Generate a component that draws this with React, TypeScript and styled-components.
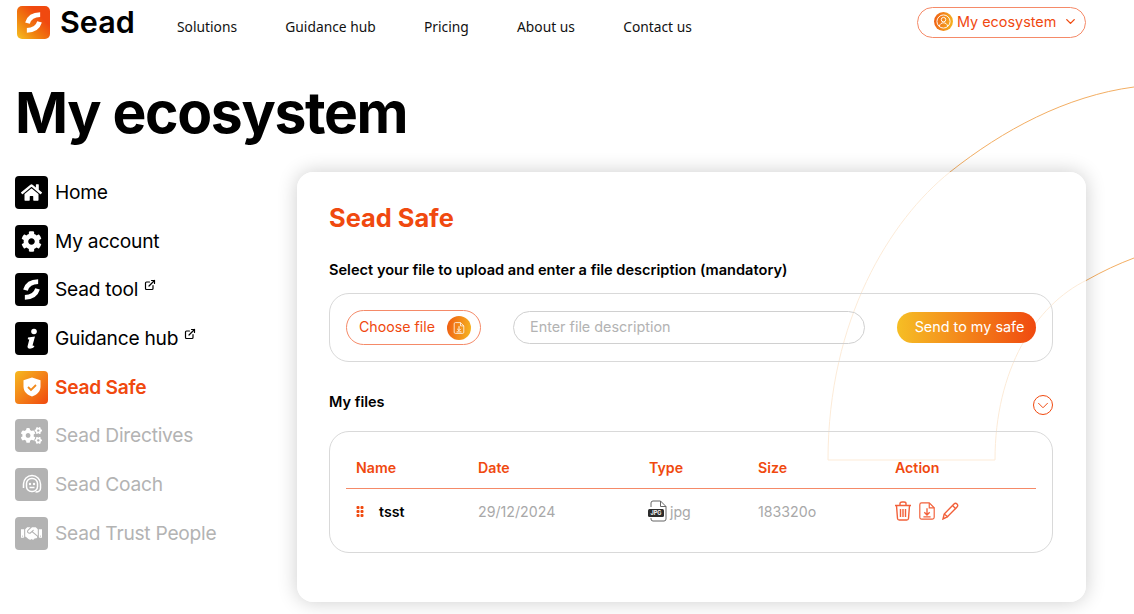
import React from "react";
import styled, { createGlobalStyle } from "styled-components";
import { ChevronDown, ExternalLink } from "lucide-react";
import { FaCog, FaCogs, FaHandshake, FaHome } from "react-icons/fa";

const orange = "#f0490f";

const GlobalStyle = createGlobalStyle`
  html, body {
    margin: 0;
    padding: 0;
    background: #fff;
    font-family: "Inter", "Liberation Sans", sans-serif;
    color: #000;
    overflow: hidden;
  }
  * { box-sizing: border-box; }
`;

const Page = styled.div`
  position: relative;
  width: 1134px;
  height: 614px;
  overflow: hidden;
`;

const Decor = styled.svg`
  position: absolute;
  inset: 0;
  pointer-events: none;
`;

const Layout = styled.div`
  position: relative;
  padding: 0 48px 0 15px;
`;

const Header = styled.header`
  display: flex;
  align-items: flex-start;
  height: 47px;
  padding-top: 5px;
`;

const Logo = styled.div`
  display: flex;
  align-items: center;
  gap: 10px;
  width: 162px;
  padding-left: 2px;
  font-size: 30.5px;
  font-weight: 600;
  line-height: 34px;
`;

const LogoIcon = styled.span`
  display: flex;
  align-items: center;
  justify-content: center;
  width: 33px;
  height: 33px;
  border-radius: 5px;
  background: linear-gradient(45deg, #f6c123, #f0800f 35%, #f0490f 70%);
`;

const Nav = styled.nav`
  display: flex;
  gap: 48.25px;
  padding-top: 12px;
  font-family: "Noto Sans", sans-serif;
  font-size: 13.8px;
  line-height: 20px;
  color: #111;
`;

const EcosystemButton = styled.button`
  margin-left: auto;
  margin-top: 2px;
  display: flex;
  align-items: center;
  height: 31px;
  width: 169px;
  padding: 0 14px 2px 16px;
  border: 1px solid #f58a68;
  border-radius: 16px;
  background: #fff;
  color: ${orange};
  font-family: inherit;
  font-size: 14.4px;
  gap: 4px;
  white-space: nowrap;
`;

const Title = styled.h1`
  margin: 0;
  font-size: 57px;
  line-height: 72px;
  font-weight: 700;
  font-optical-sizing: none;
  letter-spacing: -1.35px;
  padding-top: 30px;
`;

const Content = styled.div`
  display: flex;
  margin-top: 23px;
`;

const Sidebar = styled.ul`
  list-style: none;
  margin: 0;
  padding: 4px 0 0;
  width: 282px;
  display: flex;
  flex-direction: column;
  gap: 15.7px;
`;

const SideItem = styled.li<{ $state?: "active" | "disabled" }>`
  display: flex;
  align-items: flex-start;
  gap: 7px;
  height: 33px;
  font-size: 19.2px;
  line-height: 32px;
  letter-spacing: -0.25px;
  font-weight: ${(p) => (p.$state === "active" ? 600 : 400)};
  color: ${(p) => (p.$state === "active" ? orange : p.$state === "disabled" ? "#b3b3b3" : "#000")};
`;

const SideIcon = styled.span<{ $state?: "active" | "disabled" }>`
  display: flex;
  align-items: center;
  justify-content: center;
  flex-shrink: 0;
  width: 33px;
  height: 33px;
  border-radius: 4px;
  color: #fff;
  background: ${(p) =>
    p.$state === "active"
      ? "linear-gradient(135deg, #f6b921, #f0490f)"
      : p.$state === "disabled"
      ? "#b3b3b3"
      : "#000"};
`;

const OutLink = styled(ExternalLink)`
  margin: 6px 0 0 -1px;
`;

const Card = styled.main`
  width: 789px;
  height: 430px;
  padding: 29px 33px 0 32px;
  border-radius: 16px;
  background: rgba(255, 255, 255, 0.75);
  box-shadow: 0 0 20px rgba(0, 0, 0, 0.2);
`;

const CardTitle = styled.h2`
  margin: 0;
  font-size: 25.4px;
  line-height: 34px;
  font-weight: 700;
  color: ${orange};
`;

const Mandatory = styled.p`
  margin: 27px 0 14px;
  font-size: 14.6px;
  line-height: 17px;
  font-weight: 600;
`;

const UploadBox = styled.div`
  display: flex;
  align-items: center;
  height: 69px;
  padding: 0 16px;
  border: 1px solid #d9d9d9;
  border-radius: 20px;
`;

const ChooseFile = styled.button`
  display: flex;
  align-items: center;
  justify-content: space-between;
  flex-shrink: 0;
  width: 135px;
  height: 35px;
  padding: 0 9px 2px 12px;
  border: 1px solid #f58a68;
  border-radius: 18px;
  background: #fff;
  color: ${orange};
  font-family: inherit;
  font-size: 14.2px;
`;

const Badge = styled.span<{ $size: number }>`
  display: flex;
  align-items: center;
  justify-content: center;
  flex-shrink: 0;
  width: ${(p) => p.$size}px;
  height: ${(p) => p.$size}px;
  border-radius: 50%;
  color: #fff;
  background: linear-gradient(100deg, #ef5a12, #f6b921);
`;

const FileBadge = styled(Badge)`
  margin-bottom: -2px;
`;

const DescriptionInput = styled.input`
  flex-shrink: 0;
  width: 352px;
  height: 33px;
  margin: 0 32px;
  padding: 0 16px 2px;
  border: 1px solid #d0d0d0;
  border-radius: 17px;
  background: transparent;
  font-family: inherit;
  font-size: 14.4px;
  &::placeholder { color: #b3b3b3; opacity: 1; }
`;

const SendButton = styled.button`
  flex-shrink: 0;
  width: 139px;
  height: 31px;
  padding: 0 0 2px 6px;
  border: 0;
  border-radius: 16px;
  color: #fff;
  background: linear-gradient(90deg, #f6be25, #f0490f);
  font-family: inherit;
  font-size: 14.4px;
`;

const FilesHead = styled.div`
  display: flex;
  justify-content: space-between;
  align-items: flex-start;
  height: 69px;
  padding-top: 31px;
  font-size: 14.5px;
  line-height: 17px;
  font-weight: 600;
`;

const Toggle = styled.span`
  display: flex;
  align-items: center;
  justify-content: center;
  width: 20px;
  height: 20px;
  margin-top: 2px;
  border: 1px solid ${orange};
  border-radius: 50%;
  color: ${orange};
`;

const TableBox = styled.div`
  height: 122px;
  padding: 0 16px;
  border: 1px solid #d9d9d9;
  border-radius: 20px;
`;

const columns = "122px 171px 109px 137px 1fr";

const HeadRow = styled.div`
  display: grid;
  grid-template-columns: ${columns};
  align-items: center;
  height: 57px;
  padding: 14px 0 0 10px;
  border-bottom: 1px solid #f58a68;
  color: ${orange};
  font-size: 14.2px;
  font-weight: 600;
`;

const BodyRow = styled.div`
  display: grid;
  grid-template-columns: ${columns};
  align-items: center;
  height: 44px;
  padding-left: 10px;
  color: #a8a8a8;
  font-size: 14.2px;
`;

const NameCell = styled.div`
  display: flex;
  align-items: center;
  gap: 15px;
  color: #000;
  font-weight: 600;
`;

const TypeCell = styled.div`
  display: flex;
  align-items: center;
  gap: 3px;
  margin-left: -1px;
`;

const Actions = styled.div`
  display: flex;
  align-items: center;
  gap: 6px;
  margin-left: -1px;
  color: #f2603a;
`;

const SeadMark = ({ size, color }: { size: number; color: string }) => (
  <svg width={size} height={size} viewBox="0 0 24 24" fill="none" stroke={color} strokeWidth="4">
    <path d="M17.500 5.500C12.500 5.500 8.500 7.500 7 12.500" />
    <path d="M17 11.500C15.500 16.500 11.500 18.500 6.500 18.500" />
  </svg>
);

const InfoGlyph = () => (
  <svg width="24" height="24" viewBox="0 0 24 24" fill="#fff">
    <circle cx="14" cy="4.500" r="2.800" />
    <path d="M8 10.500l7-1-2.500 9 2 .5-1 1.500c-2 1.500-6 2-6-1l1.800-7-1.500-.3z" />
  </svg>
);

const ShieldIcon = () => (
  <svg width="24" height="24" viewBox="0 0 24 24">
    <path d="M12 2.500l8.500 2.800v6.200c0 5-3.600 8.400-8.500 10-4.900-1.600-8.500-5-8.500-10V5.300z" fill="#fff" />
    <path d="M8 12l3 3 5-5" fill="none" stroke="#f28a1c" strokeWidth="1.800" />
  </svg>
);

const CoachIcon = () => (
  <svg width="24" height="24" viewBox="0 0 24 24" fill="none" stroke="#fff" strokeWidth="1.500">
    <path d="M3.500 15v-4a8.500 8.500 0 0 1 17 0v4c0 2.500-2 4-5 4" />
    <rect x="6.500" y="5.500" width="11" height="13" rx="5" />
    <circle cx="10" cy="11" r="1.200" fill="#fff" stroke="none" />
    <circle cx="14" cy="11" r="1.200" fill="#fff" stroke="none" />
    <path d="M9.500 14.500h5" />
  </svg>
);

const FileIcon = ({ size }: { size: number }) => (
  <svg width={size} height={size} viewBox="0 0 18 20" fill="none" stroke="currentColor" strokeWidth="1.300">
    <path d="M3 1h8.500L17 6.500V17a2 2 0 0 1-2 2H3a2 2 0 0 1-2-2V3a2 2 0 0 1 2-2z" />
    <path d="M11.500 1v5.500H17" />
    <path d="M9 7v7M6 11.500L9 14.500l3-3M5 16.500h8" strokeWidth="1.500" />
  </svg>
);

const TrashIcon = () => (
  <svg width="18" height="20" viewBox="0 0 18 20" fill="none" stroke="currentColor" strokeWidth="1.400">
    <path d="M1 4.500h16M6 4V2.500C6 1.500 7 1 8 1h2c1 0 2 .5 2 1.500V4" />
    <path d="M2.500 4.500l1 13c.1 1 .8 1.500 1.700 1.500h7.600c.9 0 1.600-.5 1.700-1.500l1-13" />
    <path d="M6.500 8v8M9 8v8M11.500 8v8" />
  </svg>
);

const PencilIcon = () => (
  <svg width="17" height="18" viewBox="0 0 17 18" fill="none" stroke="currentColor" strokeWidth="1.400">
    <path d="M1 17l1.200-5L12 2c1-1 2-1 3 0s1 2 0 3l-9.800 10z" />
    <path d="M2.200 12l3.800 3M10.500 3.500l3.500 3.500" />
  </svg>
);

const JpgIcon = () => (
  <svg width="19" height="22" viewBox="0 0 19 22" fill="none">
    <path d="M3 7V3a2 2 0 0 1 2-2h7.500L18 6.500V19a2 2 0 0 1-2 2H5a2 2 0 0 1-2-2v-1" stroke="#666" strokeWidth="1" />
    <path d="M12.500 1v5.500H18" stroke="#666" strokeWidth="1" />
    <rect x="0" y="9" width="16" height="8" rx="1.500" fill="#2b2b2b" />
    <text x="8" y="15.300" textAnchor="middle" fontFamily="Inter, sans-serif" fontSize="5.500" fontWeight="700" fill="#fff">JPG</text>
  </svg>
);

const GripIcon = () => (
  <svg width="8" height="11" viewBox="0 0 8 11" fill={orange}>
    {[0, 4, 8].map((y) => (
      <React.Fragment key={y}>
        <rect x="0.500" y={y} width="3" height="3" rx="1" />
        <rect x="4.500" y={y} width="3" height="3" rx="1" />
      </React.Fragment>
    ))}
  </svg>
);

const navItems = ["Solutions", "Guidance hub", "Pricing", "About us", "Contact us"];

const App = () => (
  <Page>
    <GlobalStyle />
    <Decor width="1134" height="614" viewBox="0 0 1134 614" fill="none" stroke="#f3ae63" strokeWidth="1">
      <path d="M1134 87C1066 96 1003 130 950 172C890 220 828 320 828 460H995C995 370 1035 305 1087 280C1103 271 1118 264 1134 258" />
    </Decor>
    <Layout>
      <Header>
        <Logo>
          <LogoIcon><SeadMark size={29} color="#fff" /></LogoIcon>
          Sead
        </Logo>
        <Nav>
          {navItems.map((n) => (
            <span key={n}>{n}</span>
          ))}
        </Nav>
        <EcosystemButton>
          <Badge $size={19}>
            <svg width="15" height="15" viewBox="0 0 16 16" fill="none" stroke="#fff" strokeWidth="1">
              <circle cx="8" cy="8" r="7" />
              <circle cx="8" cy="6" r="2.400" />
              <path d="M3.500 13c.8-2.600 2.500-3.600 4.500-3.600s3.700 1 4.500 3.600" />
            </svg>
          </Badge>
          My ecosystem
          <ChevronDown size={15} strokeWidth={2.2} style={{ marginLeft: 3, flexShrink: 0 }} />
        </EcosystemButton>
      </Header>
      <Title>My ecosystem</Title>
      <Content>
        <Sidebar>
          <SideItem>
            <SideIcon><FaHome size={21} /></SideIcon>
            Home
          </SideItem>
          <SideItem>
            <SideIcon><FaCog size={21} /></SideIcon>
            My account
          </SideItem>
          <SideItem>
            <SideIcon><SeadMark size={29} color="#fff" /></SideIcon>
            Sead tool
            <OutLink size={12} strokeWidth={2.4} />
          </SideItem>
          <SideItem>
            <SideIcon><InfoGlyph /></SideIcon>
            Guidance hub
            <OutLink size={12} strokeWidth={2.4} />
          </SideItem>
          <SideItem $state="active">
            <SideIcon $state="active"><ShieldIcon /></SideIcon>
            Sead Safe
          </SideItem>
          <SideItem $state="disabled">
            <SideIcon $state="disabled"><FaCogs size={21} /></SideIcon>
            Sead Directives
          </SideItem>
          <SideItem $state="disabled">
            <SideIcon $state="disabled"><CoachIcon /></SideIcon>
            Sead Coach
          </SideItem>
          <SideItem $state="disabled">
            <SideIcon $state="disabled"><FaHandshake size={21} /></SideIcon>
            Sead Trust People
          </SideItem>
        </Sidebar>
        <Card>
          <CardTitle>Sead Safe</CardTitle>
          <Mandatory>Select your file to upload and enter a file description (mandatory)</Mandatory>
          <UploadBox>
            <ChooseFile>
              Choose file
              <FileBadge $size={24}><FileIcon size={12} /></FileBadge>
            </ChooseFile>
            <DescriptionInput placeholder="Enter file description" />
            <SendButton>Send to my safe</SendButton>
          </UploadBox>
          <FilesHead>
            My files
            <Toggle><ChevronDown size={19} strokeWidth={1.3} /></Toggle>
          </FilesHead>
          <TableBox>
            <HeadRow>
              <span>Name</span>
              <span>Date</span>
              <span>Type</span>
              <span>Size</span>
              <span>Action</span>
            </HeadRow>
            <BodyRow>
              <NameCell>
                <GripIcon />
                tsst
              </NameCell>
              <span>29/12/2024</span>
              <TypeCell>
                <JpgIcon />
                jpg
              </TypeCell>
              <span>183320o</span>
              <Actions>
                <TrashIcon />
                <FileIcon size={18} />
                <PencilIcon />
              </Actions>
            </BodyRow>
          </TableBox>
        </Card>
      </Content>
    </Layout>
  </Page>
);

export default App;
